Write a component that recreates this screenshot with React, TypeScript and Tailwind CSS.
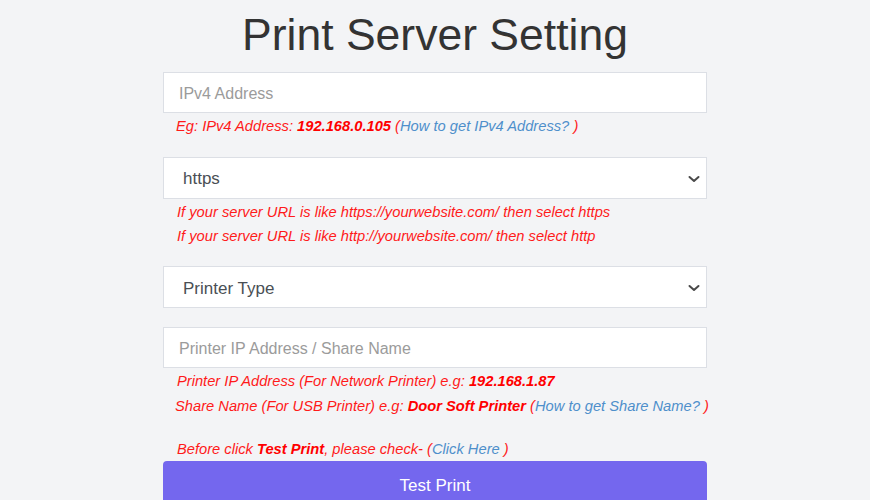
import React from "react";

const Chevron = () => (
  <svg width="12" height="10" viewBox="0 0 12 10" className="absolute right-[6px] top-1/2 -translate-y-1/2 mt-[1px]">
    <polyline points="1.5,3 6,7 10.5,3" fill="none" stroke="#4a4a4a" strokeWidth="2" strokeLinecap="round" strokeLinejoin="round" />
  </svg>
);

export default function App() {
  return (
    <div className="min-h-[500px] bg-[#f3f4f6] overflow-hidden" style={{ fontFamily: '"Liberation Sans", Arial, sans-serif' }}>
      <div className="w-[544px] mx-auto">
        <h1 className="text-[44.5px] leading-[1.2] text-[#333] text-center mt-[8px] mb-[11px]">Print Server Setting</h1>

        <div className="h-[41px] bg-white border border-[#dcdfe5] flex items-center pl-[15px] pt-[3px] text-[16px] text-[#9b9b9b]">IPv4 Address</div>
        <div className="pl-[13px] text-[14.7px] italic leading-[24px] text-[#ff1a1a] mt-[1px] whitespace-nowrap">
          Eg: IPv4 Address: <b className="font-bold text-[#ff0000]">192.168.0.105</b> (<span className="text-[#4e8fcb]">How to get IPv4 Address? </span>)
        </div>

        <div className="relative h-[42px] bg-white border border-[#dcdfe5] flex items-center pl-[19px] text-[17px] text-[#4a4f55] mt-[19px]">
          https
          <Chevron />
        </div>
        <div className="pl-[14px] text-[14.7px] italic leading-[24px] text-[#ff1a1a] mt-[1px] whitespace-nowrap">
          <div>If your server URL is like https://yourwebsite.com/ then select https</div>
          <div>If your server URL is like http://yourwebsite.com/ then select http</div>
        </div>

        <div className="relative h-[42px] bg-white border border-[#dcdfe5] flex items-center pl-[19px] pt-[3px] text-[17px] text-[#4a4f55] mt-[18px]">
          Printer Type
          <Chevron />
        </div>

        <div className="h-[41px] bg-white border border-[#dcdfe5] flex items-center pl-[15px] pt-[2px] text-[16px] text-[#9b9b9b] mt-[19px]">Printer IP Address / Share Name</div>
        <div className="text-[14.7px] italic leading-[24px] text-[#ff1a1a] mt-[1px] whitespace-nowrap">
          <div className="pl-[14px]">Printer IP Address (For Network Printer) e.g: <b className="font-bold text-[#ff0000]">192.168.1.87</b></div>
          <div className="pl-[12px] mt-[1px]">Share Name (For USB Printer) e.g: <b className="font-bold text-[#ff0000]">Door Soft Printer</b> (<span className="text-[#4e8fcb]">How to get Share Name? </span>)</div>
          <div className="pl-[14px] mt-[19px]">Before click <b className="font-bold text-[#ff0000]">Test Print</b>, please check- (<span className="text-[#4e8fcb]">Click Here </span>)</div>
        </div>

        <button className="w-full h-[48px] bg-[#7467ee] text-white text-[17px] pt-[1px] rounded-[4px] flex items-center justify-center">Test Print</button>
      </div>
    </div>
  );
}
